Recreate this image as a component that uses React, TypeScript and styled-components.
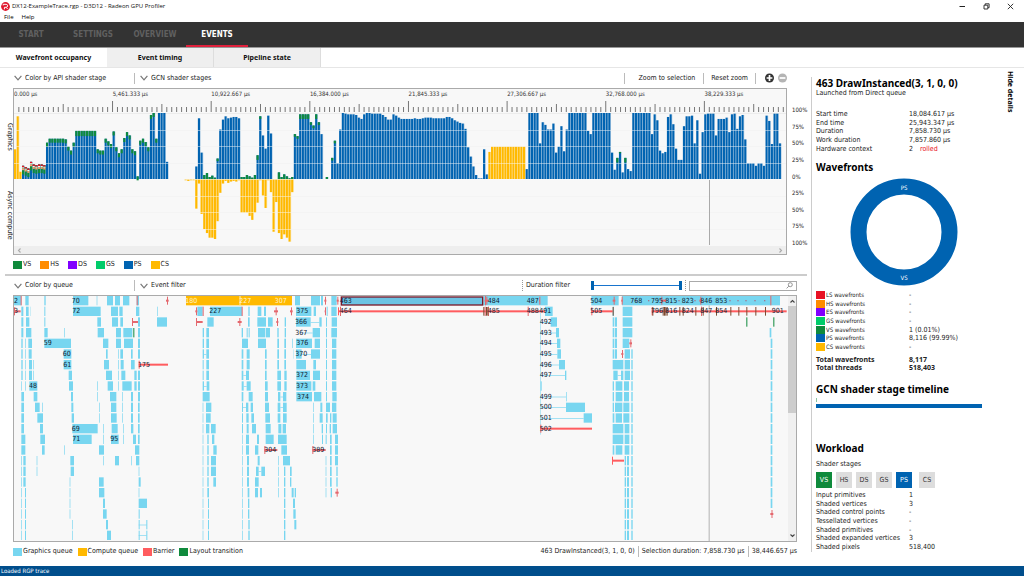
import React from 'react';
import styled, { createGlobalStyle } from 'styled-components';

const C = {
  vs: '#0f8a3c', hs: '#ff8c00', ds: '#8000ff', gs: '#00cc6a', ps: '#0063b1', cs: '#ffb900', ls: '#e81123',
  gfx: '#78d6f0', barrier: '#ff5c5f',
};
const BOLD_FONT = "'Noto Sans', 'Open Sans', sans-serif";

const Global = createGlobalStyle`
  * { box-sizing: border-box; }
  body { margin: 0; background: #fff; }
  body, button, input, select {
    font-family: 'DejaVu Sans Condensed', 'Noto Sans', sans-serif;
    font-size: 7px;
    line-height: 9px;
    color: #222;
  }
  button, select { border: 0; padding: 0; background: none; }
  h2 { margin: 0; }
  svg { display: block; }
`;

const Page = styled.div`
  min-height: 100vh;
  display: flex;
  flex-direction: column;
`;
const TitleBar = styled.header`
  height: 13px;
  display: flex;
  align-items: center;
  padding: 0 10px 0 1px;
  gap: 2px;
`;
const Title = styled.span`flex: 1; color: #111; font-family: 'Open Sans', sans-serif; font-size: 6px;`;
const WindowButtons = styled.div`display: flex; gap: 17px;`;
const MenuBar = styled.nav`
  height: 9px;
  display: flex;
  gap: 8px;
  padding-left: 4px;
  button { font-family: 'Open Sans', sans-serif; font-size: 6px; color: #000; }
`;
const MainNav = styled.nav`
  height: 25px;
  display: flex;
  background: #333;
`;
const NavItem = styled.button<{ $active?: boolean }>`
  height: 25px;
  width: 62px;
  padding-top: 1px;
  font-weight: bold;
  font-size: 8px;
  color: ${p => (p.$active ? '#fff' : '#606060')};
  border-bottom: 2px solid ${p => (p.$active ? '#e0203c' : 'transparent')};
`;
const Tabs = styled.div`
  display: flex;
  height: 21px;
  border-top: 1px solid #999;
  border-bottom: 1px solid #e6e6e6;
`;
const Tab = styled.button<{ $active?: boolean }>`
  width: 107px;
  font-family: ${BOLD_FONT};
  font-weight: bold;
  color: #111;
  background: ${p => (p.$active ? '#fff' : '#efefef')};
  border-right: ${p => (p.$active ? '0' : '1px solid #ddd')};
`;
const Body = styled.div`flex: 1; display: flex;`;
const Left = styled.main`flex: 1; min-width: 0;`;

const Toolbar = styled.div<{ $tall?: boolean }>`
  display: flex;
  align-items: center;
  height: ${p => (p.$tall ? 19 : 20)}px;
  padding: 0 ${p => (p.$tall ? 14 : 24)}px 0 14px;
`;
const PickerBox = styled.label<{ $second?: boolean }>`
  display: flex;
  align-items: center;
  gap: 3px;
  width: 120px;
  margin-left: ${p => (p.$second ? 5 : 0)}px;
  select { appearance: none; flex: 1; min-width: 0; outline: 0; }
`;
const Spacer = styled.span`flex: 1;`;
const Divider = styled.span<{ $dotted?: boolean }>`
  width: 1px;
  height: 11px;
  border-left: 1px ${p => (p.$dotted ? 'dotted #999' : 'solid #bbb')};
`;
const TextButton = styled.button<{ $wide?: boolean }>`padding: ${p => (p.$wide ? '0 8px 0 14px' : '0 7px')};`;
const ZoomButtons = styled.div`display: flex; gap: 4px; margin-left: 9px;`;
const FilterLabel = styled.span`margin-left: 3px;`;

const ChartRow = styled.div`display: flex; height: 167px;`;
const SideLabels = styled.div`
  width: 13px;
  display: flex;
  flex-direction: column;
  align-items: center;
  padding: 35px 0 0 6px;
  gap: 40px;
  span { writing-mode: vertical-rl; line-height: 7px; }
`;
const ChartBox = styled.div`
  flex: 1;
  min-width: 0;
  display: flex;
  flex-direction: column;
  border: 1px solid #aaa;
  background: #f8f8f8;
`;
const WideSvg = styled.svg`width: 100%;`;
const HScroll = styled.div`
  height: 8px;
  background: #eee;
  display: flex;
  align-items: center;
  justify-content: space-between;
  padding: 0 3px;
`;
const Percents = styled.div`
  width: 24px;
  padding: 17px 0 8px 5px;
  display: flex;
  flex-direction: column;
  justify-content: space-between;
  font-size: 6px;
`;
const Legend = styled.div<{ $gap: number }>`
  display: flex;
  align-items: center;
  gap: ${p => p.$gap}px;
  height: 19px;
  padding: 0 14px 0 13px;
`;
const LegendItem = styled.span`display: flex; align-items: center; gap: 1px;`;
const Swatch = styled.i<{ $color: string }>`
  width: 9px;
  height: 8px;
  background: ${p => p.$color};
`;
const PaneSplit = styled.hr`
  margin: 0 4px 0 5px;
  border: 0;
  height: 2px;
  background: #ccc;
`;
const EventBox = styled.div`
  display: flex;
  height: 247px;
  margin: 0 14px 0 13px;
  border: 1px solid #aaa;
  background: #f8f8f8;
`;
const EventCanvas = styled.div`flex: 1; min-width: 0;`;
const VScroll = styled.div`
  width: 8px;
  background: #f0f0f0;
  display: flex;
  flex-direction: column;
  justify-content: space-between;
  align-items: center;
  padding: 3px 0;
`;
const Thumb = styled.span`width: 8px; height: 107px; margin: 2px 0 auto; background: #cdcdcd;`;
const StatusTexts = styled.div`margin-left: auto; display: flex; gap: 3px; align-items: center;`;
const Range = styled.div`
  display: grid;
  width: 91px;
  height: 11px;
  margin: 0 3px 0 21px;
  input {
    grid-area: 1 / 1;
    appearance: none;
    width: 100%;
    height: 11px;
    margin: 0;
    background: none;
    pointer-events: none;
  }
  input:first-child { background: linear-gradient(#1874cd, #1874cd) center / 100% 1px no-repeat; }
  input::-webkit-slider-thumb {
    appearance: none;
    pointer-events: auto;
    width: 3px;
    height: 9px;
    background: #0063b1;
  }
`;
const Search = styled.label`
  display: flex;
  align-items: center;
  width: 108px;
  height: 10px;
  margin-left: 3px;
  padding-right: 3px;
  border: 1px solid #aaa;
  input { flex: 1; min-width: 0; height: 8px; padding: 0 2px; border: 0; outline: 0; }
`;

const Side = styled.aside`
  flex: none;
  width: 213px;
  margin: 9px 0 14px;
  padding-left: 4px;
  border-left: 1px solid #ccc;
  display: flex;
`;
const Details = styled.div`flex: 1;`;
const HideButton = styled.button`
  writing-mode: vertical-rl;
  align-self: flex-start;
  margin: -6px 9px 0 0;
  font-family: ${BOLD_FONT};
  font-weight: bold;
  color: #000;
`;
const Heading = styled.h2<{ $top: number }>`
  margin-top: ${p => p.$top}px;
  font-family: ${BOLD_FONT};
  font-size: 10px;
  line-height: 12px;
  color: #000;
`;
const Table = styled.table<{ $top: number; $height: number; $bold?: boolean }>`
  margin-top: ${p => p.$top}px;
  height: ${p => p.$height}px;
  border-collapse: collapse;
  font-family: ${p => (p.$bold ? BOLD_FONT : 'inherit')};
  font-weight: ${p => (p.$bold ? 'bold' : 'normal')};
  line-height: 8px;
  th { width: 93px; font-weight: inherit; text-align: left; padding: 0; }
  td { padding: 0; white-space: nowrap; }
`;
const KeyCell = styled.span`
  display: flex;
  align-items: center;
  gap: 1px;
  font-size: 6px;
`;
const Rolled = styled.span`color: #e81123; margin-left: 7px;`;
const Donut = styled.svg`width: 108px; height: 108px; margin: 5px 0 5px 34px;`;
const StageTimeline = styled.div`
  width: 166px;
  height: 4px;
  background: ${C.ps};
`;
const StageTick = styled.div`
  width: 1px;
  height: 4px;
  margin: 3px 0 2px;
  background: #8cc4a0;
`;
const StageLabel = styled.p`margin: 6px 0 3px;`;
const Stages = styled.div`display: flex; gap: 4px; button:last-child { margin-left: 3px; }`;
const Stage = styled.button<{ $color?: string }>`
  width: 16px;
  height: 16px;
  background: ${p => p.$color || '#ddd'};
  color: ${p => (p.$color ? '#fff' : '#333')};
`;
const StatusBar = styled.footer`
  height: 10px;
  background: #004e8c;
  color: #fff;
  font-size: 6px;
  line-height: 10px;
  padding-left: 1px;
`;

/* ---------- occupancy data: one entry per time slice, percent ---------- */
const rep = (n: number, v: number): number[] => Array(n).fill(v);
const GRAPHICS: number[] = [
  45, 95, 11, 20, 18, 16, 26, 22, 21, 22, 22, 21, 55, ...rep(6, 61), 60, 49, 43, 55, ...rep(8, 73),
  45, 43, 43, 61, 57, 53, 72, 48, 39, 45, 62, 71, 66, 45, 42, 4, 58, 61, 56, 48, 97, 100, 61, 100, 100, 100, 26,
  ...rep(10, 0), 19, 92, 40, 6, 9, 3, 5, 2, 31, 75, 90, 95, 92, 93, 94, 94, 92, 3, 3, 6, 4, 2, 6, 36, 95, 66, 46,
  96, 69, 0, 0, 10, 3, 7, 4, 1, 3, 68, 65, 98, 98, 98, 98, 86, 81, 98, 86, 68, 0, 3, 0, 32, 58, 24, 75, 100, 99,
  98, 98, 98, 97, 93, 91, 98, 100, 100, 99, 99, 99, 99, 97, 94, 90, 90, 98, 96, 93, ...rep(5, 91), 92, 91, 91,
  92, 93, 93, 93, 92, 92, 92, 92, 92, 94, 94, 92, 89, 87, 85, 84, 76, 48, 34, 19, 6, 1, 1, 45, 7,
  41, ...rep(13, 49), 15, 100, 100, 100, 100, 54, 86, 82, 75, 75, 84, 40, 49, 80, 42, 75, ...rep(7, 100),
  73, 68, ...rep(7, 100), 40, 14, 32, 41, 10, 32, 15, 12, ...rep(7, 100), 68, 98, 89, 43, 39, 41, 94, 98, 83,
  46, 29, 29, 80, 95, 95, 96, 54, 89, 8, 71, 98, 99, 99, 99, 66, 91, 91, 91, 93, 71, 98, 99, 76, 95, 97, 60,
  24, 24, 24, 20, 24, 24, 20, 96, 88, 53, 99, 99, 54,
];
const ASYNC_START = 64;
const ASYNC: number[] = [
  1, 2, 1, 1, 44, 6, 52, 75, 81, 88, 88, 90, 63, 20, 6, 2, 5, 3, 2, 3, 1, 50, 50, 50, 55, 61, 50, 35, 1, 24, 43,
  1, 19, 79, 34, 81, 90, 83, 88, 94, 19,
];
const vsPart = (i: number, v: number): number => {
  if (i >= 3 && i <= 11) return 7;
  if (i >= 12 && i <= 53) return i >= 23 && i <= 30 ? 8 : 6;
  if (v <= 10 && i > 60 && i < 120) return v;
  if ([91, 107, 108, 109, 110, 113].includes(i)) return 7;
  if ([76, 92, 105, 106, 111, 112, 114, 119, 120].includes(i)) return 4;
  if ([226, 229].includes(i)) return 7;
  if (i === 227) return 2;
  return 0;
};
const isCompute = (i: number) => i < 3 || (i >= 178 && i <= 191);

function OccupancyChart() {
  const slice = 767.5 / GRAPHICS.length;
  const base = 90;
  const h = (v: number) => v * 0.66;
  const labels = ['0.000', '5,461.333', '10,922.667', '16,384.000', '21,845.333', '27,306.667', '32,768.000', '38,229.333'];
  return (
    <WideSvg height="157" role="img" aria-label="Wavefront occupancy">
      <svg width="100%" height="157" viewBox="0 0 772 157" preserveAspectRatio="none">
        {[0, 1, 2, 3, 5, 6, 7].map(n => (
          <rect key={n} x="0" y={Math.round(24 + n * 16.5)} width="772" height="1" fill="#ececec" />
        ))}
        {Array.from({ length: 156 }, (_, n) => n + 1).map(n => {
          const len = n % 20 === 0 ? 11 : n % 10 === 0 ? 8 : 5;
          return <rect key={n} x={n * 4.932 - 0.6} y={23 - len} width="1" height={len} fill="#777" />;
        })}
        {GRAPHICS.map((v, i) => {
          const x = i * slice;
          const vs = vsPart(i, v);
          const hs = i >= 3 && i <= 11;
          const top = base - h(v);
          return (
            <g key={i}>
              <rect x={x} y={top} width="2.1" height={h(v)} fill={isCompute(i) ? C.cs : C.ps} />
              {v > 0 && <rect x={x + 2.1} y={top} width="0.57" height={h(v)} fill={isCompute(i) ? C.cs : C.ps} opacity="0.35" />}
              {vs > 0 && <rect x={x} y={top} width="2.1" height={h(vs + (hs ? 6 : 0))} fill={C.vs} />}
              {hs && <rect x={x} y={top} width="2.1" height="1.6" fill={C.ls} />}
              {hs && <rect x={x} y={top + 1.6} width="2.1" height="1" fill="#fff" />}
              {hs && <rect x={x} y={top + 2.6} width="2.1" height="1.8" fill="#f8a070" />}
            </g>
          );
        })}
        {ASYNC.map((v, i) => (
          <g key={i}>
            <rect x={(i + ASYNC_START) * slice} y={base + 0.6} width="2.1" height={h(v)} fill={C.cs} />
            <rect x={(i + ASYNC_START) * slice + 2.1} y={base + 0.6} width="0.57" height={h(v)} fill={C.cs} opacity="0.35" />
          </g>
        ))}
        {[41, 57, 74, 107, 123, 140].map(y => (
          <rect key={y} x="0" y={y} width="772" height="1" fill="#fff" opacity="0.45" />
        ))}
        <rect x="695" y="91" width="1" height="65" fill="#aaa" />
      </svg>
      {labels.map((t, n) => (
        <text key={t} x={`${(n * 98.64 * 100) / 772}%`} y="7" fontSize="6" fill="#333">{t} µs</text>
      ))}
    </WideSvg>
  );
}

/* ---------- event data: [start, end] spans per row ---------- */
type Span = [number, number];
const ROWS: Span[][] = [
  [[42, 64], [76, 86], [133, 137], [219, 265], [290, 292], [321, 339], [345, 360], [369, 388], [410, 417], [885, 900], [933, 960], [963, 969], [994, 1010], [1450, 1643], [1774, 1856], [1866, 2340]],
  [[64, 70], [78, 86], [92, 93], [133, 136], [219, 302], [333, 354], [358, 368], [408, 418], [471, 473], [592, 608], [630, 726], [745, 749], [773, 784], [792, 798], [888, 934], [941, 948], [980, 983], [994, 1010], [1635, 1658], [1838, 1842], [1868, 1897]],
  [[64, 70], [78, 88], [133, 136], [292, 303], [336, 354], [361, 369], [414, 420], [471, 501], [622, 641], [744, 749], [772, 798], [804, 818], [854, 858], [888, 932], [958, 965], [978, 981], [995, 1011], [1652, 1671], [1838, 1843], [1845, 1851], [1868, 1897]],
  [[64, 70], [78, 94], [133, 143], [193, 195], [293, 312], [348, 363], [370, 397], [414, 420], [608, 612], [619, 627], [725, 729], [740, 743], [746, 749], [774, 796], [798, 810], [832, 836], [854, 858], [938, 960], [978, 981], [994, 1011], [1668, 1677], [1838, 1843], [1845, 1851], [1868, 1897], [2309, 2314]],
  [[64, 68], [75, 77], [85, 96], [133, 213], [309, 325], [348, 363], [372, 399], [414, 420], [608, 612], [619, 627], [726, 744], [774, 798], [832, 837], [853, 858], [876, 878], [888, 936], [944, 960], [978, 981], [996, 1009], [1671, 1681], [1838, 1843], [1845, 1851], [1868, 1888]],
  [[64, 68], [75, 77], [86, 95], [191, 214], [318, 323], [354, 356], [361, 369], [393, 398], [414, 420], [608, 612], [619, 627], [725, 730], [740, 749], [795, 800], [832, 837], [853, 858], [880, 881], [888, 905], [933, 960], [978, 981], [996, 1009], [1672, 1683], [1838, 1843], [1845, 1851], [1874, 1890], [1894, 1898]],
  [[64, 68], [75, 77], [87, 96], [99, 101], [191, 214], [312, 327], [354, 356], [362, 371], [393, 404], [608, 611], [619, 627], [725, 730], [740, 749], [795, 800], [832, 837], [853, 858], [889, 918], [940, 948], [978, 981], [996, 1009], [1677, 1695], [1838, 1870], [1874, 1890], [1894, 1898]],
  [[64, 68], [75, 77], [87, 96], [99, 101], [206, 216], [318, 336], [354, 356], [364, 376], [403, 410], [414, 420], [608, 611], [619, 627], [725, 730], [738, 747], [795, 800], [832, 843], [853, 860], [889, 930], [939, 960], [978, 981], [996, 1009], [1695, 1699], [1840, 1853], [1863, 1870], [1874, 1890], [1894, 1898]],
  [[64, 66], [75, 77], [88, 112], [207, 219], [292, 294], [323, 339], [354, 356], [367, 395], [403, 410], [414, 420], [608, 612], [620, 628], [725, 731], [740, 752], [795, 803], [832, 843], [853, 860], [889, 934], [938, 946], [978, 981], [996, 1009], [1622, 1625], [1838, 1842], [1847, 1867], [1872, 1887], [1894, 1898]],
  [[64, 72], [101, 112], [213, 219], [292, 294], [330, 349], [367, 369], [393, 399], [414, 420], [608, 629], [725, 730], [746, 758], [795, 804], [834, 841], [849, 859], [889, 936], [942, 964], [978, 981], [997, 1010], [1698, 1700], [1838, 1842], [1847, 1867], [1872, 1887], [1894, 1898]],
  [[64, 72], [105, 119], [126, 128], [214, 220], [297, 299], [333, 349], [367, 369], [393, 399], [414, 419], [608, 610], [618, 634], [726, 729], [738, 745], [752, 759], [795, 807], [833, 841], [849, 860], [940, 942], [961, 967], [978, 990], [996, 1009], [1698, 1755], [1838, 1842], [1845, 1867], [1870, 1888], [1894, 1898]],
  [[64, 72], [112, 129], [215, 222], [297, 299], [333, 350], [367, 369], [393, 399], [414, 419], [608, 610], [618, 632], [726, 729], [739, 746], [754, 762], [796, 810], [833, 841], [849, 860], [940, 942], [959, 968], [978, 983], [990, 994], [998, 1010], [1751, 1776], [1838, 1843], [1847, 1866], [1870, 1888], [1894, 1898]],
  [[64, 72], [120, 129], [217, 293], [309, 311], [335, 353], [369, 371], [393, 400], [414, 419], [608, 610], [618, 628], [633, 647], [726, 729], [740, 746], [756, 768], [797, 812], [835, 844], [848, 858], [940, 942], [965, 969], [978, 981], [989, 993], [998, 1011], [1838, 1870], [1874, 1888], [1894, 1898]],
  [[64, 76], [121, 135], [219, 275], [309, 311], [333, 356], [369, 371], [399, 408], [414, 419], [608, 610], [622, 626], [636, 643], [727, 729], [738, 747], [771, 777], [797, 821], [834, 860], [940, 942], [966, 969], [977, 980], [990, 995], [1005, 1014], [1838, 1870], [1874, 1888], [1894, 1898]],
  [[64, 76], [126, 134], [193, 195], [297, 312], [405, 418], [608, 610], [622, 626], [640, 650], [727, 729], [738, 747], [765, 775], [844, 861], [990, 995], [1005, 1014], [1838, 1843], [1847, 1867], [1874, 1888], [1894, 1898]],
  [[64, 66], [70, 77], [110, 112], [211, 222], [309, 311], [345, 357], [393, 395], [408, 418], [608, 610], [622, 626], [633, 648], [727, 729], [741, 747], [773, 779], [834, 836], [849, 870], [977, 979], [990, 995], [1005, 1014]],
  [[64, 66], [70, 77], [110, 112], [212, 222], [416, 418], [608, 610], [622, 626], [633, 648], [727, 729], [741, 747], [768, 776], [784, 795], [834, 836], [852, 856], [870, 875], [977, 979], [990, 995], [1009, 1013]],
  [[64, 66], [70, 77], [209, 211], [297, 311], [416, 422], [608, 610], [622, 626], [640, 648], [727, 729], [741, 747], [765, 776], [834, 836], [852, 856], [870, 874], [977, 979], [990, 995], [1009, 1013]],
  [[64, 66], [75, 78], [209, 211], [297, 313], [416, 418], [608, 610], [622, 627], [727, 729], [743, 748], [765, 774], [780, 786], [834, 836], [852, 856], [875, 881], [884, 888], [977, 979], [992, 996]],
  [[64, 66], [75, 78], [209, 211], [309, 315], [416, 441], [608, 610], [624, 627], [727, 729], [744, 748], [852, 856], [879, 885]],
  [[64, 66], [75, 78], [209, 211], [309, 320], [416, 419], [608, 610], [624, 627], [727, 729], [744, 748], [852, 856], [880, 887]],
  [[64, 66], [75, 78], [217, 219], [318, 324], [416, 419], [439, 442], [608, 610], [624, 627], [727, 729], [745, 749], [852, 856], [883, 889]],
  [[64, 66], [75, 78], [217, 219], [321, 333], [416, 419], [439, 442], [608, 610], [624, 627], [727, 729], [745, 749], [852, 856]],
];
for (let r = 4; r < 20; r++) ROWS[r].push([2312, 2317]);
for (let r = 15; r < 23; r++) ROWS[r].push([1874, 1878], [1881, 1887], [1894, 1898]);

/* [row, start, end, strong] */
const BARRIERS: [number, number, number, boolean?][] = [
  [0, 498, 506], [1, 42, 62], [2, 396, 414], [6, 416, 504, true], [1, 586, 592], [2, 588, 608], [2, 713, 725],
  [1, 822, 834], [1, 870, 878], [2, 829, 835], [0, 973, 979], [1, 974, 978], [0, 1010, 1016], [1, 1014, 1635, true],
  [0, 1454, 1466], [1, 1774, 1838, true], [1, 1955, 2360, true], [4, 1888, 1896], [5, 1864, 1870],
  [12, 1621, 1776, true], [14, 793, 832], [14, 937, 977], [15, 1836, 1872, true], [18, 1006, 1016], [20, 2311, 2320],
  [0, 1838, 1846], [0, 1864, 1868], [0, 1984, 1998], [0, 2098, 2106], [0, 1618, 1620],
];
const RED_TICKS: Span[] = [
  [0, 62], [0, 410], [1, 608], [1, 725], [0, 1455], [1, 1020], [1, 1454], [1, 1464], [1, 1583], [0, 2311], [1, 2103],
];
const DARK_TICKS = [1450, 1458, 1462, 1838, 1957, 1988, 1992, 1996, 2000, 2038, 2048, 2086, 2108, 2148, 2191, 2215, 2239, 2266, 2295];
const GREENS: Span[] = [[3, 400], [2, 2239], [2, 2320]];
const LINKS: [number, number, number][] = [
  [2, 932, 958], [3, 905, 938], [5, 905, 933], [2, 1621, 1652], [3, 1621, 1668], [4, 1621, 1671], [5, 1621, 1672],
  [6, 1621, 1677], [7, 1621, 1695], [9, 1621, 1698], [10, 1621, 1698], [11, 1621, 1751], [7, 1853, 1863],
  [16, 776, 784], [21, 416, 440], [22, 416, 440], [5, 612, 619], [8, 612, 620], [7, 730, 738], [8, 731, 740],
  [10, 729, 738], [9, 841, 849], [10, 841, 849],
];
const NAMES: [number, number, string, string?][] = [
  [0, 42, '2'], [1, 42, '3'], [0, 215, '70'], [1, 217, '72'], [4, 131, '59'], [5, 188, '60'], [6, 190, '61'], [8, 87, '48'],
  [12, 215, '69'], [13, 217, '71'], [13, 331, '95'], [6, 414, '175'], [0, 556, '180', '#fff3cc'], [0, 718, '227', '#fff3cc'],
  [0, 824, '307', '#fff3cc'], [1, 628, '227'], [1, 889, '375'], [2, 885, '366'], [3, 886, '367'], [4, 889, '376'], [5, 886, '370'],
  [7, 888, '372'], [8, 888, '373'], [9, 891, '374'], [14, 793, '304'], [14, 937, '389'], [0, 1019, '463'], [1, 1019, '464'],
  [0, 1463, '484'], [1, 1463, '485'], [0, 1580, '487'], [1, 1580, '488'], [1, 1618, '491'], [2, 1619, '492'], [3, 1619, '493'],
  [4, 1619, '494'], [5, 1619, '495'], [6, 1619, '496'], [7, 1619, '497'], [9, 1619, '499'], [10, 1619, '500'], [11, 1619, '501'],
  [12, 1619, '502'], [0, 1771, '504'], [1, 1771, '505'], [0, 1891, '768'], [0, 1953, '795'], [0, 1996, '815'], [0, 2045, '823'],
  [0, 2101, '846'], [0, 2146, '853'], [1, 1953, '796'], [1, 1996, '816'], [1, 2045, '824'], [1, 2101, '847'], [1, 2146, '854'],
  [1, 2315, '901'],
];

function EventTimeline() {
  const y = (r: number) => r * 32;
  return (
    <WideSvg height="245" role="img" aria-label="Events by queue">
      <svg width="100%" height="245" viewBox="42 0 2322 735" preserveAspectRatio="none">
        {ROWS.map((row, r) =>
          row.map(([a, b]) => <rect key={`${r}-${a}`} x={a} y={y(r)} width={b - a} height="28" fill={C.gfx} />),
        )}
        <rect x="1621" y="32" width="2" height="384" fill={C.gfx} opacity="0.8" />
        {LINKS.map(([r, a, b]) => <rect key={`${r}-${a}`} x={a} y={y(r) + 14} width={b - a} height="2" fill={C.gfx} />)}
        <rect x="558" y="0" width="318" height="28" fill={C.cs} />
        <rect x="718" y="0" width="4" height="28" fill="#ffe28a" />
        <rect x="1024" y="3" width="424" height="24" fill="#6cc3e3" stroke="#7a1a2a" strokeWidth="4" />
        {GREENS.map(([r, x]) => <rect key={x} x={x} y={y(r)} width="3" height="28" fill={C.vs} />)}
        {BARRIERS.map(([r, a, b, strong]) => (
          <g key={`${r}-${a}`} fill={strong ? C.barrier : '#e4686e'}>
            <rect x={a} y={y(r) + 11} width={b - a} height="6" />
            <rect x={a + (b - a < 14 ? (b - a) / 2 - 1 : 0)} y={y(r) + 2} width="3" height="24" />
          </g>
        ))}
        {RED_TICKS.map(([r, x]) => <rect key={`${r}-${x}`} x={x} y={y(r)} width="3" height="28" fill="#e4686e" />)}
        {DARK_TICKS.map(x => <rect key={x} x={x} y="33" width="3" height="26" fill="#7c4a30" />)}
        {[1906, 1944, 2035, 2083, 2188, 2212, 2236, 2263, 2292].map(x => (
          <rect key={x} x={x} y="12" width="4" height="4" fill="#a07890" />
        ))}
        <rect x="2126" y="28" width="3" height="707" fill="#999" opacity="0.7" />
      </svg>
      {NAMES.map(([r, x, t, color]) => (
        <text key={`${r}-${x}`} x={`${((x - 42) * 100) / 2322}%`} y={Math.round(r * 10.667 + 6.6)} fontSize="7" fill={color || '#123'}>{t}</text>
      ))}
    </WideSvg>
  );
}

const Chevron = () => (
  <svg width="8" height="6" viewBox="0 0 8 6" fill="none" stroke="#777" strokeWidth="1.2"><path d="M.6.8 4 4.8 7.4.8" /></svg>
);
const Arrow = ({ d, color = '#444' }: { d: string; color?: string }) => (
  <svg width="5" height="5" viewBox="0 0 5 5" fill="none" stroke={color} strokeWidth="1.1"><path d={d} /></svg>
);
function Picker({ text, second }: { text: string; second?: boolean }) {
  return (
    <PickerBox $second={second}>
      <Chevron />
      <select aria-label={text}><option>{text}</option></select>
    </PickerBox>
  );
}
function ZoomIcon({ plus }: { plus?: boolean }) {
  return (
    <svg width="9" height="10" viewBox="0 0 9 10">
      <circle cx="4.5" cy="5" r="4.5" fill={plus ? '#333' : '#b4b4b4'} />
      <path d={plus ? 'M1.6 5h5.8M4.5 2.1v5.8' : 'M1.6 5h5.8'} stroke="#fff" strokeWidth="1.7" />
    </svg>
  );
}
function Key({ items }: { items: [string, string][] }) {
  return <>{items.map(([t, c]) => <LegendItem key={t}><Swatch $color={c} />{t}</LegendItem>)}</>;
}
type Row = [React.ReactNode, React.ReactNode];
function DataTable({ rows, top, height, bold }: { rows: Row[]; top: number; height: number; bold?: boolean }) {
  return (
    <Table $top={top} $height={height} $bold={bold}>
      <tbody>{rows.map(([k, v], i) => <tr key={i}><th scope="row">{k}</th><td>{v}</td></tr>)}</tbody>
    </Table>
  );
}
const wave = (name: string, color: string, value: string): Row => [
  <KeyCell><Swatch $color={color} />{name} wavefronts</KeyCell>, value,
];

export default function App() {
  return (
    <Page>
      <Global />
      <TitleBar>
        <svg width="9" height="9" viewBox="0 0 9 9">
          <circle cx="4.5" cy="4.5" r="4.4" fill="#e0182d" />
          <path d="M2.2 3.4V2.3h2.900a1.500 1.500 0 0 1 0 3H3.400v2M5.200 5.400 6.600 7" fill="none" stroke="#fff" strokeWidth="1" />
        </svg>
        <Title>DX12-ExampleTrace.rgp - D3D12 - Radeon GPU Profiler</Title>
        <WindowButtons>
          <button aria-label="Minimize"><svg width="7" height="7" viewBox="0 0 7 7"><path d="M.5 3.5h5.5" stroke="#222" /></svg></button>
          <button aria-label="Restore"><svg width="7" height="7" viewBox="0 0 7 7" fill="none" stroke="#222" strokeWidth=".9"><path d="M1 2.2h3.8V6H1zM2.2 2V.8h3.9v3.9H5" /></svg></button>
          <button aria-label="Close"><svg width="7" height="7" viewBox="0 0 7 7"><path d="m.8.8 5.4 5.4M6.2.8.8 6.2" stroke="#222" strokeWidth=".9" /></svg></button>
        </WindowButtons>
      </TitleBar>
      <MenuBar><button>File</button><button>Help</button></MenuBar>
      <MainNav>
        <NavItem>START</NavItem><NavItem>SETTINGS</NavItem><NavItem>OVERVIEW</NavItem><NavItem $active>EVENTS</NavItem>
      </MainNav>
      <Tabs role="tablist">
        <Tab role="tab" aria-selected $active>Wavefront occupancy</Tab>
        <Tab role="tab">Event timing</Tab>
        <Tab role="tab">Pipeline state</Tab>
      </Tabs>
      <Body>
        <Left>
          <Toolbar>
            <Picker text="Color by API shader stage" />
            <Divider />
            <Picker text="GCN shader stages" second />
            <Spacer />
            <Divider />
            <TextButton $wide>Zoom to selection</TextButton>
            <Divider />
            <TextButton>Reset zoom</TextButton>
            <Divider />
            <ZoomButtons>
              <button aria-label="Zoom in"><ZoomIcon plus /></button>
              <button aria-label="Zoom out"><ZoomIcon /></button>
            </ZoomButtons>
          </Toolbar>
          <ChartRow>
            <SideLabels><span>Graphics</span><span>Async compute</span></SideLabels>
            <ChartBox>
              <OccupancyChart />
              <HScroll><Arrow color="#aaa" d="M3.5.5 1.5 2.5l2 2" /><Arrow color="#aaa" d="M1.5.5l2 2-2 2" /></HScroll>
            </ChartBox>
            <Percents>
              {['100%', '75%', '50%', '25%', '0%', '25%', '50%', '75%', '100%'].map((t, i) => <span key={i}>{t}</span>)}
            </Percents>
          </ChartRow>
          <Legend $gap={9}>
            <Key items={[['VS', C.vs], ['HS', C.hs], ['DS', C.ds], ['GS', C.gs], ['PS', C.ps], ['CS', C.cs]]} />
          </Legend>
          <PaneSplit />
          <Toolbar $tall>
            <Picker text="Color by queue" />
            <Divider />
            <Picker text="Event filter" second />
            <Spacer />
            <Divider $dotted />
            <FilterLabel>Duration filter</FilterLabel>
            <Range>
              <input type="range" aria-label="Shortest duration" defaultValue={0} />
              <input type="range" aria-label="Longest duration" defaultValue={100} />
            </Range>
            <Divider $dotted />
            <Search>
              <input type="text" aria-label="Search events" />
              <svg width="7" height="7" viewBox="0 0 7 7" fill="none" stroke="#888" strokeWidth=".9"><circle cx="4.3" cy="2.7" r="2" /><path d="M2.8 4.2.6 6.4" /></svg>
            </Search>
          </Toolbar>
          <EventBox>
            <EventCanvas><EventTimeline /></EventCanvas>
            <VScroll><Arrow d="M.5 3.5l2-2 2 2" /><Thumb /><Arrow d="M.5 1.5l2 2 2-2" /></VScroll>
          </EventBox>
          <Legend $gap={5}>
            <Key items={[['Graphics queue', C.gfx], ['Compute queue', C.cs], ['Barrier', C.barrier], ['Layout transition', C.vs]]} />
            <StatusTexts>
              <span>463 DrawInstanced(3, 1, 0, 0)</span><Divider />
              <span>Selection duration: 7,858.730 µs</span><Divider />
              <span>38,446.657 µs</span>
            </StatusTexts>
          </Legend>
        </Left>
        <Side>
          <Details>
            <Heading $top={0}>463 DrawInstanced(3, 1, 0, 0)</Heading>
            <div>Launched from Direct queue</div>
            <DataTable top={12} height={43} rows={[
              ['Start time', '18,084.617 µs'], ['End time', '25,943.347 µs'], ['Duration', '7,858.730 µs'],
              ['Work duration', '7,857.860 µs'], ['Hardware context', <>2<Rolled>rolled</Rolled></>],
            ]} />
            <Heading $top={8}>Wavefronts</Heading>
            <Donut viewBox="0 0 108 108" role="img" aria-label="Wavefronts by stage">
              <circle cx="54" cy="54" r="45.5" fill="none" stroke={C.ps} strokeWidth="16" />
              <text x="54" y="12" fontSize="6" fill="#fff" textAnchor="middle">PS</text>
              <text x="54" y="102" fontSize="6" fill="#fff" textAnchor="middle">VS</text>
            </Donut>
            <DataTable top={0} height={60} rows={[
              wave('LS', C.ls, '-'), wave('HS', C.hs, '-'), wave('ES', C.ds, '-'), wave('GS', C.gs, '-'),
              wave('VS', C.vs, '1 (0.01%)'), wave('PS', C.ps, '8,116 (99.99%)'), wave('CS', C.cs, '-'),
            ]} />
            <DataTable top={5} height={16} bold rows={[['Total wavefronts', '8,117'], ['Total threads', '518,403']]} />
            <Heading $top={11}>GCN shader stage timeline</Heading>
            <StageTick />
            <StageTimeline />
            <Heading $top={34}>Workload</Heading>
            <StageLabel>Shader stages</StageLabel>
            <Stages>
              <Stage $color={C.vs}>VS</Stage><Stage>HS</Stage><Stage>DS</Stage><Stage>GS</Stage>
              <Stage $color={C.ps}>PS</Stage><Stage>CS</Stage>
            </Stages>
            <DataTable top={3} height={60} rows={[
              ['Input primitives', '1'], ['Shaded vertices', '3'], ['Shaded control points', '-'], ['Tessellated vertices', '-'],
              ['Shaded primitives', '-'], ['Shaded expanded vertices', '3'], ['Shaded pixels', '518,400'],
            ]} />
          </Details>
          <HideButton>Hide details</HideButton>
        </Side>
      </Body>
      <StatusBar>Loaded RGP trace</StatusBar>
    </Page>
  );
}
